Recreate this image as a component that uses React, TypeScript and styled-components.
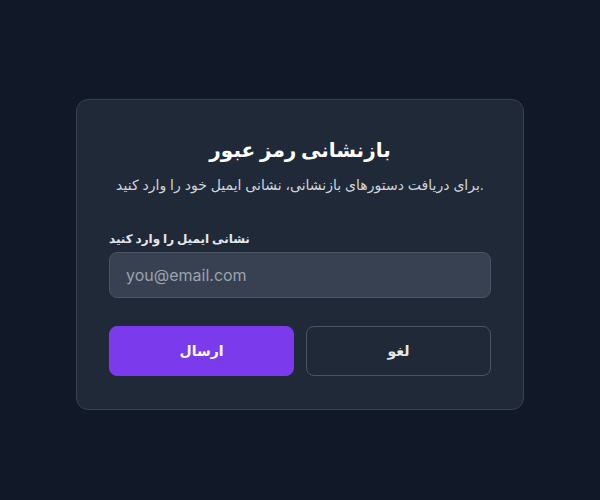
import React from "react";
import styled, { createGlobalStyle } from "styled-components";

const GlobalStyle = createGlobalStyle`
  html, body {
    margin: 0;
    padding: 0;
    background: #111827;
  }
  body {
    font-family: Inter, "DejaVu Sans", sans-serif;
  }
  * {
    box-sizing: border-box;
  }
`;

const Page = styled.div`
  display: flex;
  align-items: center;
  justify-content: center;
  width: 100%;
  height: 500px;
  padding-top: 8px;
  background: #111827;
`;

const Card = styled.div`
  width: 448px;
  padding: 34px 32px 33px;
  background: #1f2937;
  border: 1px solid #374151;
  border-radius: 12px;
`;

const Title = styled.h2`
  margin: 0 0 9px;
  text-align: center;
  font-size: 20px;
  line-height: 32px;
  font-weight: 700;
  color: #ffffff;
`;

const Subtitle = styled.p`
  margin: 0 0 34px;
  text-align: center;
  font-size: 14px;
  line-height: 20px;
  color: #d1d5db;
`;

const Label = styled.label`
  display: block;
  margin-bottom: 3px;
  font-size: 12px;
  line-height: 20px;
  font-weight: 700;
  color: #e5e7eb;
`;

const Input = styled.input`
  display: block;
  width: 100%;
  height: 46px;
  padding: 0 16px;
  background: #374151;
  border: 1px solid #4b5563;
  border-radius: 8px;
  font-family: Inter, sans-serif;
  font-size: 16px;
  color: #f9fafb;
  outline: none;

  &::placeholder {
    color: #9ca3af;
  }
`;

const Actions = styled.div`
  display: grid;
  grid-template-columns: 1fr 1fr;
  gap: 12px;
  margin-top: 28px;
`;

const Button = styled.button<{ $primary?: boolean }>`
  height: 50px;
  border-radius: 8px;
  font-family: Inter, "DejaVu Sans", sans-serif;
  font-size: 14px;
  font-weight: 700;
  cursor: pointer;
  color: ${({ $primary }) => ($primary ? "#ffffff" : "#e5e7eb")};
  background: ${({ $primary }) => ($primary ? "#7c3aed" : "transparent")};
  border: 1px solid ${({ $primary }) => ($primary ? "#7c3aed" : "#4b5563")};
`;

export default function App() {
  return (
    <>
      <GlobalStyle />
      <Page>
        <Card>
          <Title>بازنشانی رمز عبور</Title>
          <Subtitle>برای دریافت دستورهای بازنشانی، نشانی ایمیل خود را وارد کنید.</Subtitle>
          <form onSubmit={(e) => e.preventDefault()}>
            <Label htmlFor="email">نشانی ایمیل را وارد کنید</Label>
            <Input id="email" type="email" placeholder="you@email.com" />
            <Actions>
              <Button type="submit" $primary>
                ارسال
              </Button>
              <Button type="button">لغو</Button>
            </Actions>
          </form>
        </Card>
      </Page>
    </>
  );
}
